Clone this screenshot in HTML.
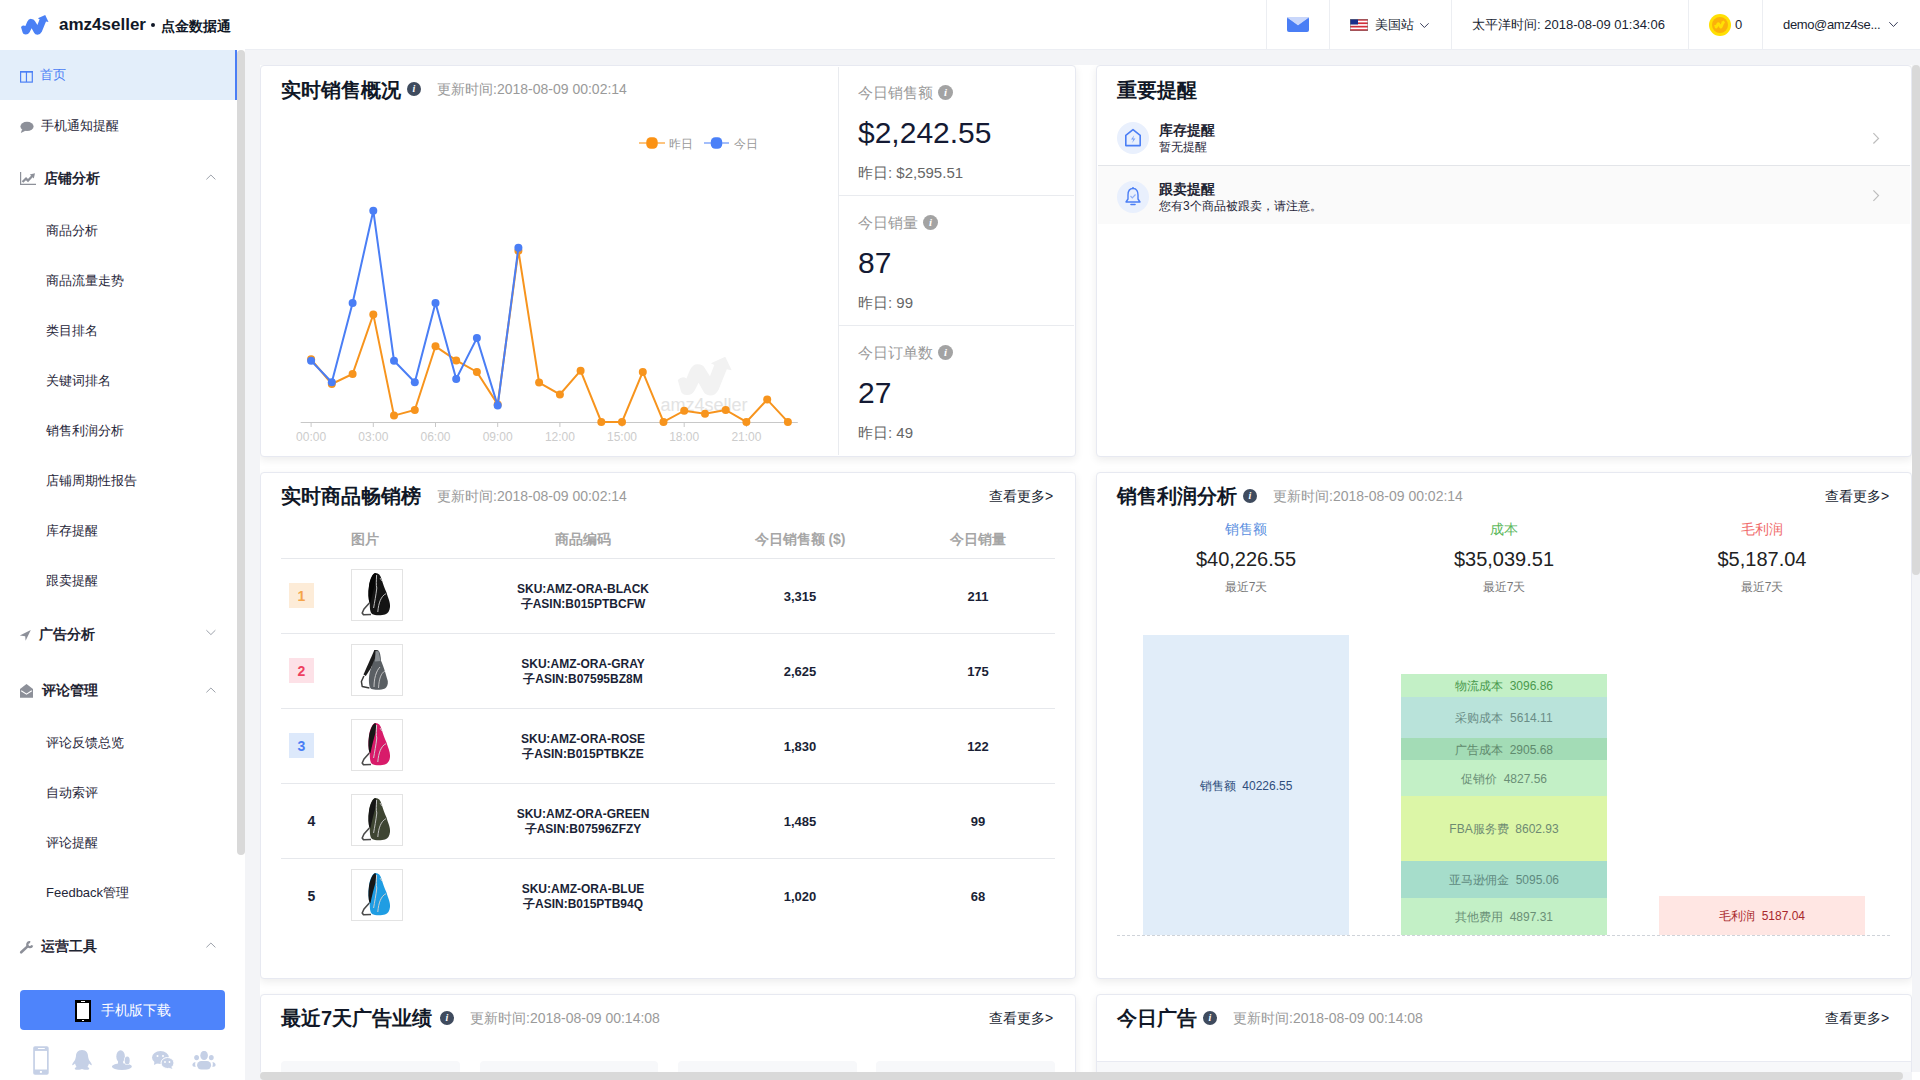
<!DOCTYPE html>
<html><head><meta charset="utf-8">
<style>
*{box-sizing:border-box;margin:0;padding:0}
html,body{width:1920px;height:1080px;overflow:hidden}
body{font-family:"Liberation Sans",sans-serif;background:#f3f4f7;position:relative;color:#333}
.abs{position:absolute}
.nw{white-space:nowrap}
#hdr{position:absolute;left:0;top:0;width:1920px;height:50px;background:#fff;border-bottom:1px solid #eceef3}
.vdiv{position:absolute;top:0;width:1px;height:49px;background:#eceef2}
#side{position:absolute;left:0;top:49px;width:245px;height:1031px;background:#fff}
.si{position:absolute;left:41px;font-size:13px;color:#1f2639;line-height:16px;white-space:nowrap}
.sg{position:absolute;font-size:14px;font-weight:bold;color:#1f2533;line-height:16px;white-space:nowrap}
.ss{position:absolute;left:46px;font-size:13px;color:#1f2639;line-height:16px;white-space:nowrap}
.chev{position:absolute;left:206px;width:8px;height:8px;border-left:1px solid #a8adb7;border-top:1px solid #a8adb7}
.card{position:absolute;background:#fff;border:1px solid #e7e9f1;border-radius:4px;box-shadow:0 3px 8px rgba(0,0,0,0.075)}
.ttl{position:absolute;font-size:20px;font-weight:bold;color:#111827;line-height:24px;white-space:nowrap}
.upd{position:absolute;font-size:14px;color:#9a9a9a;line-height:16px;white-space:nowrap}
.more{position:absolute;font-size:14px;color:#1a1f33;line-height:16px;white-space:nowrap}
.info{position:absolute;width:14px;height:14px;border-radius:50%;background:#3f4b5e;color:#fff;font:italic bold 10px/14px "Liberation Serif",serif;text-align:center}
.ginfo{position:absolute;width:15px;height:15px;border-radius:50%;background:#a3a3a3;color:#fff;font:italic bold 11px/15px "Liberation Serif",serif;text-align:center}
</style></head><body>

<!-- HEADER -->
<div id="hdr">
  <svg class="abs" style="left:16px;top:10px" width="40" height="30" viewBox="0 0 40 30"><path d="M5 16.9 Q7.2 14.6 9.4 16.1 L11.2 11.8 Q12.8 8.6 15.3 8.9 Q17.8 8.9 18.9 11 L21.4 15 L23.6 9.2 L21.9 8.3 L29.2 5 L32.5 11.9 L30 11.4 L25.8 21.8 Q24.2 24.9 21.4 24.8 Q19 24.7 18.1 22.8 L15.6 18.3 L13.6 22.2 Q12.2 24.6 9.7 24.5 Q7.1 24.4 6.6 22.6 Z" fill="#4a80f5"/></svg>
  <div class="abs nw" style="left:59px;top:15px;font-size:17px;font-weight:bold;color:#111827;line-height:20px">amz4seller</div>
  <div class="abs" style="left:151px;top:23px;width:4px;height:4px;border-radius:50%;background:#111827"></div>
  <div class="abs nw" style="left:161px;top:17px;font-size:14px;color:#111827;line-height:18px;font-weight:bold;-webkit-text-stroke:0">点金数据通</div>

  <div class="vdiv" style="left:1266px"></div>
  <div class="vdiv" style="left:1329px"></div>
  <div class="vdiv" style="left:1451px"></div>
  <div class="vdiv" style="left:1688px"></div>
  <div class="vdiv" style="left:1762px"></div>
  <svg class="abs" style="left:1287px;top:17px" width="22" height="15" viewBox="0 0 22 15"><rect x="0" y="0" width="22" height="15" rx="2" fill="#4a7ef5"/><path d="M0.5 1 L11 8.5 L21.5 1 V0.5 Q21.5 0 21 0 H1 Q0.5 0 0.5 0.5 Z" fill="#c9d7fb"/><path d="M0.3 1.2 L11 9 L21.7 1.2" fill="none" stroke="#4a7ef5" stroke-width="0.6"/></svg>
  <svg class="abs" style="left:1350px;top:19px" width="18" height="12" viewBox="0 0 18 12"><rect x="0" y="0" width="18" height="12" fill="#fff"/><rect x="0" y="0" width="18" height="1.7" fill="#d22f3a"/><rect x="0" y="3.4" width="18" height="1.7" fill="#d22f3a"/><rect x="0" y="6.8" width="18" height="1.7" fill="#d22f3a"/><rect x="0" y="10.2" width="18" height="1.8" fill="#d22f3a"/><rect x="0" y="0" width="8" height="5.5" fill="#1c2f8a"/><rect x="0.25" y="0.25" width="17.5" height="11.5" fill="none" stroke="#777" stroke-width="0.5"/></svg>
  <div class="abs nw" style="left:1375px;top:16px;font-size:13px;color:#1a1f33;line-height:17px">美国站</div>
  <svg class="abs" style="left:1416px;top:18px" width="16" height="14" viewBox="0 0 16 14"><polyline points="4.3,5.3 8.4,9.5 12.6,5.3" fill="none" stroke="#3a3f5c" stroke-width="1"/></svg>
  <div class="abs nw" style="left:1472px;top:16px;font-size:13px;color:#1a1f33;line-height:17px">太平洋时间: 2018-08-09 01:34:06</div>
  <svg class="abs" style="left:1709px;top:14px" width="22" height="22" viewBox="0 0 22 22"><circle cx="11" cy="11" r="11" fill="#ffe003"/><circle cx="11" cy="11" r="8" fill="#fbb10b"/><path transform="translate(3.2 4.6) scale(0.4)" d="M5 16.9 Q7.2 14.6 9.4 16.1 L11.2 11.8 Q12.8 8.6 15.3 8.9 Q17.8 8.9 18.9 11 L21.4 15 L23.6 9.2 L21.9 8.3 L29.2 5 L32.5 11.9 L30 11.4 L25.8 21.8 Q24.2 24.9 21.4 24.8 Q19 24.7 18.1 22.8 L15.6 18.3 L13.6 22.2 Q12.2 24.6 9.7 24.5 Q7.1 24.4 6.6 22.6 Z" fill="#ffe003"/></svg>
  <div class="abs nw" style="left:1735px;top:16px;font-size:13px;color:#1a1f33;line-height:17px">0</div>
  <div class="abs nw" style="left:1783px;top:16px;font-size:13px;color:#1a1f33;line-height:17px;letter-spacing:-0.35px">demo@amz4se...</div>
  <svg class="abs" style="left:1885px;top:17px" width="16" height="14" viewBox="0 0 16 14"><polyline points="4.3,5.2 8.5,9.5 12.6,5.2" fill="none" stroke="#3a3f5c" stroke-width="1"/></svg>
</div>

<!-- SIDEBAR -->
<div id="side">
  <div class="abs" style="left:0;top:1px;width:235px;height:50px;background:#e3eefa"></div>
  <div class="abs" style="left:235px;top:1px;width:2px;height:50px;background:#4a7ef5"></div>
  <div class="abs" style="left:237px;top:1px;width:8px;height:805px;background:#d9d9d9;border-radius:4px"></div>
</div>
<!-- sidebar items -->
<svg class="abs" style="left:20px;top:71px" width="13" height="12" viewBox="0 0 13 12"><rect x="0.6" y="0.6" width="11.7" height="10.5" fill="none" stroke="#4c80f5" stroke-width="1.2"/><rect x="0" y="0" width="12.9" height="1.6" fill="#4c80f5"/><line x1="6.45" y1="0.6" x2="6.45" y2="11" stroke="#4c80f5" stroke-width="1.2"/></svg>
<div class="si" style="left:40px;top:67px;color:#4c80f5">首页</div>
<svg class="abs" style="left:19px;top:121px" width="15" height="13" viewBox="0 0 15 13"><ellipse cx="8" cy="5.4" rx="6.6" ry="4.6" fill="#8d9099"/><path d="M3 8.5 L1.8 12 L7 9.6 Z" fill="#8d9099"/></svg>
<div class="si" style="top:118px">手机通知提醒</div>
<svg class="abs" style="left:20px;top:172px" width="16" height="13" viewBox="0 0 16 13"><path d="M0.6 0 V12.4 H16" fill="none" stroke="#8d9099" stroke-width="1.2"/><path d="M2.5 10 L6 6.6 L8 8.6 L12.3 4" fill="none" stroke="#8d9099" stroke-width="2.2"/><path d="M9.8 2.6 L15 1.2 L13.8 6.4 Z" fill="#8d9099"/></svg>
<div class="sg" style="left:44px;top:170px">店铺分析</div>
<svg class="abs" style="left:204px;top:172px" width="14" height="10" viewBox="0 0 14 10"><polyline points="2.4,7.4 6.9,3 11.4,7.4" fill="none" stroke="#9da2ab" stroke-width="1"/></svg>
<div class="ss" style="top:223px">商品分析</div>
<div class="ss" style="top:273px">商品流量走势</div>
<div class="ss" style="top:323px">类目排名</div>
<div class="ss" style="top:373px">关键词排名</div>
<div class="ss" style="top:423px">销售利润分析</div>
<div class="ss" style="top:473px">店铺周期性报告</div>
<div class="ss" style="top:523px">库存提醒</div>
<div class="ss" style="top:573px">跟卖提醒</div>
<svg class="abs" style="left:19px;top:629px" width="13" height="13" viewBox="0 0 13 13"><path d="M0.8 6.6 L11.8 1 L6.6 11.8 L6.2 7.2 Z" fill="#8d9099"/></svg>
<div class="sg" style="left:39px;top:626px">广告分析</div>
<svg class="abs" style="left:204px;top:627px" width="14" height="10" viewBox="0 0 14 10"><polyline points="2.4,3.2 6.9,7.6 11.4,3.2" fill="none" stroke="#9da2ab" stroke-width="1"/></svg>
<svg class="abs" style="left:19px;top:684px" width="16" height="15" viewBox="0 0 16 15"><path d="M1 5 L7.5 0 L14 5 V13.8 H1 Z" fill="#8d9099"/><path d="M2.2 6.8 L7.5 10.2 L12.8 6.8" fill="none" stroke="#fff" stroke-width="1.1"/></svg>
<div class="sg" style="left:42px;top:682px">评论管理</div>
<svg class="abs" style="left:204px;top:685px" width="14" height="10" viewBox="0 0 14 10"><polyline points="2.4,7.4 6.9,3 11.4,7.4" fill="none" stroke="#9da2ab" stroke-width="1"/></svg>
<div class="ss" style="top:735px">评论反馈总览</div>
<div class="ss" style="top:785px">自动索评</div>
<div class="ss" style="top:835px">评论提醒</div>
<div class="ss" style="top:885px">Feedback管理</div>
<svg class="abs" style="left:19px;top:939px" width="16" height="16" viewBox="0 0 16 16"><path d="M2.2 13.3 L8.3 7.6" stroke="#8d9099" stroke-width="2.6" stroke-linecap="round"/><path d="M11.2 3.1 A2.5 2.5 0 1 0 13.2 6.3" fill="none" stroke="#8d9099" stroke-width="2.3"/></svg>
<div class="sg" style="left:41px;top:938px">运营工具</div>
<svg class="abs" style="left:204px;top:940px" width="14" height="10" viewBox="0 0 14 10"><polyline points="2.4,7.4 6.9,3 11.4,7.4" fill="none" stroke="#9da2ab" stroke-width="1"/></svg>
<div class="abs" style="left:20px;top:990px;width:205px;height:40px;background:#4e84fb;border-radius:4px"></div>
<svg class="abs" style="left:75px;top:1000px" width="16" height="22" viewBox="0 0 16 22"><rect x="0" y="0" width="16" height="22" fill="#000"/><rect x="2" y="3" width="12" height="16" fill="#fff"/><rect x="6" y="1" width="4" height="1" fill="#fff"/><rect x="7" y="20" width="2" height="1" fill="#fff"/></svg>
<div class="abs nw" style="left:101px;top:1002px;font-size:14px;color:#fff;line-height:16px">手机版下载</div>
<svg class="abs" style="left:33px;top:1046px" width="16" height="29" viewBox="0 0 16 29"><rect x="0.2" y="0.2" width="15.5" height="28.5" rx="1.8" fill="#c5d0e6"/><rect x="1.9" y="4.9" width="12.1" height="18.6" fill="#fff"/><rect x="4.9" y="2" width="6.9" height="1" fill="#fff"/><rect x="6.9" y="25" width="2" height="1.9" fill="#fff"/></svg>
<svg class="abs" style="left:72px;top:1050px" width="20" height="20" viewBox="0 0 20 20"><path d="M10 0 C5.5 0 4 3.5 4 6 C3.8 7.5 3.5 8.5 3 10 C1.5 12 0.3 13.5 0.2 15 C0.5 15.5 1.5 15 3 13.5 C3.5 15 4 16 4.5 17 C3 17.6 2.4 18.5 3 19.3 C3.8 20 7 20 8.5 19.5 L10 19 L11.5 19.5 C13 20 16.2 20 17 19.3 C17.6 18.5 17 17.6 15.5 17 C16 16 16.5 15 17 13.5 C18.5 15 19.5 15.5 19.8 15 C19.7 13.5 18.5 12 17 10 C16.5 8.5 16.2 7.5 16 6 C16 3.5 14.5 0 10 0 Z" fill="#c5d0e6"/></svg>
<svg class="abs" style="left:112px;top:1050px" width="22" height="21" viewBox="0 0 22 21"><ellipse cx="9.9" cy="16.6" rx="10" ry="3.4" fill="#c5d0e6"/><ellipse cx="8.6" cy="6.4" rx="4.3" ry="6.2" fill="#c5d0e6"/><rect x="6" y="10" width="5.2" height="4.5" fill="#c5d0e6"/><ellipse cx="15.2" cy="10.6" rx="3.1" ry="4.5" fill="#fff"/><ellipse cx="15.2" cy="10.6" rx="2.5" ry="4" fill="#c5d0e6"/></svg>
<svg class="abs" style="left:152px;top:1051px" width="22" height="18" viewBox="0 0 22 18"><ellipse cx="8.5" cy="6.5" rx="8.5" ry="6.5" fill="#c5d0e6"/><path d="M2.5 10 L2 14 L6 12 Z" fill="#c5d0e6"/><circle cx="5.5" cy="5" r="1" fill="#fff"/><circle cx="11" cy="5" r="1" fill="#fff"/><ellipse cx="15.5" cy="12" rx="6.5" ry="5.5" fill="#c5d0e6" stroke="#fff" stroke-width="1"/><path d="M19 15.5 L20.5 18 L16.5 16.5 Z" fill="#c5d0e6"/><circle cx="13" cy="11" r="0.9" fill="#fff"/><circle cx="17.5" cy="11" r="0.9" fill="#fff"/></svg>
<svg class="abs" style="left:191px;top:1051px" width="26" height="20" viewBox="0 0 26 20"><ellipse cx="13.1" cy="4.4" rx="3.8" ry="4.6" fill="#c5d0e6"/><ellipse cx="5.6" cy="6.6" rx="2.4" ry="2.7" fill="#c5d0e6"/><ellipse cx="20.3" cy="6.6" rx="2.4" ry="2.7" fill="#c5d0e6"/><rect x="6.1" y="9.9" width="14" height="8.6" rx="4.2" fill="#c5d0e6"/><path d="M4.5 11 C2 11.5 1 13 1.5 14.5 C2 15.8 3.5 16 4.8 15.8 C4 14.3 4 12.5 4.5 11 Z" fill="#c5d0e6"/><path d="M21.5 11 C24 11.5 25 13 24.5 14.5 C24 15.8 22.5 16 21.2 15.8 C22 14.3 22 12.5 21.5 11 Z" fill="#c5d0e6"/></svg>


<!-- MAIN CARDS -->
<div class="abs" style="left:260px;top:65px;width:1652px;height:1015px;background:#fff"></div>
<div class="card" style="left:260px;top:65px;width:816px;height:392px"></div>
<div class="ttl" style="left:281px;top:78px">实时销售概况</div>
<div class="info" style="left:407px;top:82px">i</div>
<div class="upd" style="left:437px;top:81px">更新时间:2018-08-09 00:02:14</div>
<svg class="abs" style="left:0;top:0" width="1080" height="460" viewBox="0 0 1080 460">
  <path transform="translate(668 346.9) scale(1.96)" d="M5 16.9 Q7.2 14.6 9.4 16.1 L11.2 11.8 Q12.8 8.6 15.3 8.9 Q17.8 8.9 18.9 11 L21.4 15 L23.6 9.2 L21.9 8.3 L29.2 5 L32.5 11.9 L30 11.4 L25.8 21.8 Q24.2 24.9 21.4 24.8 Q19 24.7 18.1 22.8 L15.6 18.3 L13.6 22.2 Q12.2 24.6 9.7 24.5 Q7.1 24.4 6.6 22.6 Z" fill="#f2f2f2"/>
  <text x="704" y="411" text-anchor="middle" font-size="18" fill="#e3e3e3" font-family="Liberation Sans">amz4seller</text>
  <line x1="300.7" y1="422.5" x2="797.8" y2="422.5" stroke="#c8c8c8" stroke-width="1"/><line x1="311.1" y1="422.5" x2="311.1" y2="427" stroke="#c8c8c8" stroke-width="1"/><line x1="373.3" y1="422.5" x2="373.3" y2="427" stroke="#c8c8c8" stroke-width="1"/><line x1="435.5" y1="422.5" x2="435.5" y2="427" stroke="#c8c8c8" stroke-width="1"/><line x1="497.7" y1="422.5" x2="497.7" y2="427" stroke="#c8c8c8" stroke-width="1"/><line x1="559.9" y1="422.5" x2="559.9" y2="427" stroke="#c8c8c8" stroke-width="1"/><line x1="622.0" y1="422.5" x2="622.0" y2="427" stroke="#c8c8c8" stroke-width="1"/><line x1="684.2" y1="422.5" x2="684.2" y2="427" stroke="#c8c8c8" stroke-width="1"/><line x1="746.4" y1="422.5" x2="746.4" y2="427" stroke="#c8c8c8" stroke-width="1"/>
  <g font-size="12" fill="#cccccc" font-family="Liberation Sans"><text x="311.1" y="441" text-anchor="middle">00:00</text><text x="373.3" y="441" text-anchor="middle">03:00</text><text x="435.5" y="441" text-anchor="middle">06:00</text><text x="497.7" y="441" text-anchor="middle">09:00</text><text x="559.9" y="441" text-anchor="middle">12:00</text><text x="622.0" y="441" text-anchor="middle">15:00</text><text x="684.2" y="441" text-anchor="middle">18:00</text><text x="746.4" y="441" text-anchor="middle">21:00</text></g>
  <polyline points="311.1,359.3 331.8,384.0 352.6,374.0 373.3,314.4 394.0,415.6 414.8,410.0 435.5,346.3 456.2,360.4 476.9,371.9 497.7,404.4 518.4,250.7 539.1,382.6 559.9,394.4 580.6,370.7 601.3,421.9 622.0,421.9 642.8,371.9 663.5,421.9 684.2,410.7 705.0,413.7 725.7,410.0 746.4,421.9 767.2,399.6 787.9,421.9" fill="none" stroke="#f7941d" stroke-width="2"/>
  <circle cx="311.1" cy="359.3" r="4" fill="#f7941d"/><circle cx="331.8" cy="384.0" r="4" fill="#f7941d"/><circle cx="352.6" cy="374.0" r="4" fill="#f7941d"/><circle cx="373.3" cy="314.4" r="4" fill="#f7941d"/><circle cx="394.0" cy="415.6" r="4" fill="#f7941d"/><circle cx="414.8" cy="410.0" r="4" fill="#f7941d"/><circle cx="435.5" cy="346.3" r="4" fill="#f7941d"/><circle cx="456.2" cy="360.4" r="4" fill="#f7941d"/><circle cx="476.9" cy="371.9" r="4" fill="#f7941d"/><circle cx="497.7" cy="404.4" r="4" fill="#f7941d"/><circle cx="518.4" cy="250.7" r="4" fill="#f7941d"/><circle cx="539.1" cy="382.6" r="4" fill="#f7941d"/><circle cx="559.9" cy="394.4" r="4" fill="#f7941d"/><circle cx="580.6" cy="370.7" r="4" fill="#f7941d"/><circle cx="601.3" cy="421.9" r="4" fill="#f7941d"/><circle cx="622.0" cy="421.9" r="4" fill="#f7941d"/><circle cx="642.8" cy="371.9" r="4" fill="#f7941d"/><circle cx="663.5" cy="421.9" r="4" fill="#f7941d"/><circle cx="684.2" cy="410.7" r="4" fill="#f7941d"/><circle cx="705.0" cy="413.7" r="4" fill="#f7941d"/><circle cx="725.7" cy="410.0" r="4" fill="#f7941d"/><circle cx="746.4" cy="421.9" r="4" fill="#f7941d"/><circle cx="767.2" cy="399.6" r="4" fill="#f7941d"/><circle cx="787.9" cy="421.9" r="4" fill="#f7941d"/>
  <polyline points="311.1,360.7 331.8,382.2 352.6,303.0 373.3,210.7 394.0,360.7 414.8,382.2 435.5,303.0 456.2,378.9 476.9,338.1 497.7,405.6 518.4,247.8" fill="none" stroke="#4a7ef5" stroke-width="2"/>
  <circle cx="311.1" cy="360.7" r="4" fill="#4a7ef5"/><circle cx="331.8" cy="382.2" r="4" fill="#4a7ef5"/><circle cx="352.6" cy="303.0" r="4" fill="#4a7ef5"/><circle cx="373.3" cy="210.7" r="4" fill="#4a7ef5"/><circle cx="394.0" cy="360.7" r="4" fill="#4a7ef5"/><circle cx="414.8" cy="382.2" r="4" fill="#4a7ef5"/><circle cx="435.5" cy="303.0" r="4" fill="#4a7ef5"/><circle cx="456.2" cy="378.9" r="4" fill="#4a7ef5"/><circle cx="476.9" cy="338.1" r="4" fill="#4a7ef5"/><circle cx="497.7" cy="405.6" r="4" fill="#4a7ef5"/><circle cx="518.4" cy="247.8" r="4" fill="#4a7ef5"/>
  <line x1="639" y1="143" x2="665" y2="143" stroke="#fdc47e" stroke-width="2"/>
  <rect x="646.3" y="137.3" width="11.4" height="11.4" rx="4.5" fill="#fb9214"/>
  <line x1="704" y1="143" x2="729" y2="143" stroke="#a3befb" stroke-width="2"/>
  <rect x="710.8" y="137.3" width="11.4" height="11.4" rx="4.5" fill="#4a80f8"/>
  <text x="669" y="148" font-size="12" fill="#999" font-family="Liberation Sans">昨日</text>
  <text x="734" y="148" font-size="12" fill="#999" font-family="Liberation Sans">今日</text>
</svg>
<div class="abs" style="left:838px;top:67px;width:1px;height:388px;background:#e9ebef"></div>
<div class="abs" style="left:839px;top:195px;width:235px;height:1px;background:#e9ebef"></div>
<div class="abs" style="left:839px;top:325px;width:235px;height:1px;background:#e9ebef"></div>
<div class="abs nw" style="left:858px;top:84px;font-size:15px;color:#9a9a9a;line-height:17px">今日销售额</div>
<div class="ginfo" style="left:938px;top:85px">i</div>
<div class="abs nw" style="left:858px;top:116px;font-size:30px;color:#141a33;line-height:34px">$2,242.55</div>
<div class="abs nw" style="left:858px;top:164px;font-size:15px;color:#666;line-height:17px">昨日: $2,595.51</div>
<div class="abs nw" style="left:858px;top:214px;font-size:15px;color:#9a9a9a;line-height:17px">今日销量</div>
<div class="ginfo" style="left:923px;top:215px">i</div>
<div class="abs nw" style="left:858px;top:246px;font-size:30px;color:#141a33;line-height:34px">87</div>
<div class="abs nw" style="left:858px;top:294px;font-size:15px;color:#666;line-height:17px">昨日: 99</div>
<div class="abs nw" style="left:858px;top:344px;font-size:15px;color:#9a9a9a;line-height:17px">今日订单数</div>
<div class="ginfo" style="left:938px;top:345px">i</div>
<div class="abs nw" style="left:858px;top:376px;font-size:30px;color:#141a33;line-height:34px">27</div>
<div class="abs nw" style="left:858px;top:424px;font-size:15px;color:#666;line-height:17px">昨日: 49</div>

<div class="card" style="left:1096px;top:65px;width:816px;height:392px"></div>
<div class="ttl" style="left:1117px;top:78px">重要提醒</div>
<div class="abs" style="left:1098px;top:165px;width:812px;height:1px;background:#e3e5e9"></div>
<div class="abs" style="left:1098px;top:166px;width:812px;height:58px;background:#fafafa"></div>
<div class="abs" style="left:1117px;top:122px;width:32px;height:32px;border-radius:50%;background:#e9f0fd"></div>
<svg class="abs" style="left:1124px;top:128px" width="18" height="20" viewBox="0 0 18 20"><path d="M1.8 7.3 L9 1.6 L16.2 7.3 V17.6 H1.8 Z" fill="none" stroke="#4a7ef5" stroke-width="1.6" stroke-linejoin="round"/><path d="M10.2 7.2 L7 11.6 H9.3 L8.2 15 L11.4 10.4 H9.1 Z" fill="#7aa2f8"/></svg>
<div class="abs nw" style="left:1159px;top:122px;font-size:14px;font-weight:bold;color:#1f2533;line-height:16px">库存提醒</div>
<div class="abs nw" style="left:1159px;top:140px;font-size:12px;color:#1f2639;line-height:15px">暂无提醒</div>
<div class="abs" style="left:1117px;top:181px;width:32px;height:32px;border-radius:50%;background:#e9f0fd"></div>
<svg class="abs" style="left:1124px;top:186px" width="18" height="22" viewBox="0 0 18 22"><path d="M9 2.5 C5 2.5 4 6 4 9 V13 L2 16 H16 L14 13 V9 C14 6 13 2.5 9 2.5 Z" fill="none" stroke="#4a7ef5" stroke-width="1.4" stroke-linejoin="round"/><line x1="9" y1="1" x2="9" y2="2.5" stroke="#4a7ef5" stroke-width="1.4"/><path d="M7 18.5 H11" stroke="#4a7ef5" stroke-width="1.6" stroke-linecap="round"/><path d="M6.5 10 L8.3 11.8 L11.5 8.5" fill="none" stroke="#8fb0f7" stroke-width="1.2"/></svg>
<div class="abs nw" style="left:1159px;top:181px;font-size:14px;font-weight:bold;color:#1f2533;line-height:16px">跟卖提醒</div>
<div class="abs nw" style="left:1159px;top:199px;font-size:12px;color:#1f2639;line-height:15px">您有3个商品被跟卖，请注意。</div>
<svg class="abs" style="left:1868px;top:128px" width="16" height="20" viewBox="0 0 16 20"><polyline points="5.4,5.2 10.5,10.4 5.4,15.5" fill="none" stroke="#bdbdbd" stroke-width="1.2"/></svg>
<svg class="abs" style="left:1868px;top:185px" width="16" height="20" viewBox="0 0 16 20"><polyline points="5.4,5.3 10.5,10.6 5.4,15.8" fill="none" stroke="#bdbdbd" stroke-width="1.2"/></svg>

<div class="card" style="left:260px;top:472px;width:816px;height:507px"></div>
<div class="ttl" style="left:281px;top:484px">实时商品畅销榜</div>
<div class="upd" style="left:437px;top:488px">更新时间:2018-08-09 00:02:14</div>
<div class="more" style="left:989px;top:488px">查看更多&gt;</div>
<div class="abs nw" style="left:325px;top:531px;width:80px;text-align:center;font-size:14px;font-weight:bold;color:#a6a6a6;line-height:16px">图片</div>
<div class="abs nw" style="left:483px;top:531px;width:200px;text-align:center;font-size:14px;font-weight:bold;color:#a6a6a6;line-height:16px">商品编码</div>
<div class="abs nw" style="left:700px;top:531px;width:200px;text-align:center;font-size:14px;font-weight:bold;color:#a6a6a6;line-height:16px">今日销售额 ($)</div>
<div class="abs nw" style="left:878px;top:531px;width:200px;text-align:center;font-size:14px;font-weight:bold;color:#a6a6a6;line-height:16px">今日销量</div>
<div class="abs" style="left:281px;top:558px;width:774px;height:1px;background:#e6e8ec"></div>
<div class="abs" style="left:289px;top:583px;width:25px;height:25px;background:#fdecd8;color:#f5a44a;font-size:14px;font-weight:bold;text-align:center;line-height:27px">1</div>
<div class="abs" style="left:351px;top:569px;width:52px;height:52px;border:1px solid #e3e3e3;background:#fff"></div>
<svg class="abs" style="left:351px;top:569px" width="52" height="52" viewBox="0 0 52 52"><path d="M18.4 34 L13 40 L11.2 44 L12.5 45.8 L20 45.5" fill="none" stroke="#4a4a4a" stroke-width="1.6" stroke-linejoin="round"/><path d="M24.6 4 C27.5 4 29.5 6 30.5 10 C32 15 33.5 19 35.5 23.5 C37 29 39.5 33 39 38 C38.5 42 37 44.5 34 45.5 C31 46.5 24 46.8 21 45 C19 43 18.7 39 18.8 34.5 C17.5 30 17 24 18 17 C19 10 21.5 4 24.6 4 Z" fill="#141414"/><path d="M24.5 4 C21.5 4.5 19 11 18 17 C17 24 17.3 30 18.4 33.8 L19.5 34 C21 27 22.5 20 24.5 14 C25 10 25.4 6 24.5 4 Z" fill="#050505"/><path d="M25.6 6 C25.3 12 25 16 25.8 19 C25 26 23.6 33 22.6 39" fill="none" stroke="#bdbdbd" stroke-width="1"/><path d="M35 24.7 C30 27 27.5 34 26.8 43" fill="none" stroke="#bdbdbd" stroke-width="1"/><path d="M29 9 L31 12" stroke="#bdbdbd" stroke-width="0.9"/></svg>
<div class="abs nw" style="left:483px;top:582px;width:200px;text-align:center;font-size:12px;font-weight:bold;color:#1a1f36;line-height:15px">SKU:AMZ-ORA-BLACK<br>子ASIN:B015PTBCFW</div>
<div class="abs nw" style="left:700px;top:589px;width:200px;text-align:center;font-size:13px;font-weight:bold;color:#1a1f36;line-height:16px">3,315</div>
<div class="abs nw" style="left:878px;top:589px;width:200px;text-align:center;font-size:13px;font-weight:bold;color:#1a1f36;line-height:16px">211</div>
<div class="abs" style="left:281px;top:633px;width:774px;height:1px;background:#e6e8ec"></div>
<div class="abs" style="left:289px;top:658px;width:25px;height:25px;background:#fde1e7;color:#ee3f5f;font-size:14px;font-weight:bold;text-align:center;line-height:27px">2</div>
<div class="abs" style="left:351px;top:644px;width:52px;height:52px;border:1px solid #e3e3e3;background:#fff"></div>
<svg class="abs" style="left:351px;top:644px" width="52" height="52" viewBox="0 0 52 52"><path d="M12.9 32 L10.4 37.5 L11.2 42.5 L18.4 44" fill="none" stroke="#3a3a3a" stroke-width="1.5" stroke-linejoin="round"/><path d="M23.4 6 L27.5 6.5 C29 8 29.8 12 30.1 17 C32 21 34 27 36.8 37 C37.2 40.5 36 43 34 44.5 C31 46 24 46.3 20.5 45 C18.5 43.8 17.8 40 17.9 35 C18.2 30 19 26 20.7 22.7 Z" fill="#5a5f63"/><path d="M23.4 6 L27 6.5 L20 24 L14.8 32 L12.5 30.5 Z" fill="#1c1c1c"/><path d="M24.5 7 L27.5 7.2 L29.5 17 L24 17.5 Z" fill="#8d9296"/><path d="M29 23 C25 27 23 35 23 43" fill="none" stroke="#c8c8c8" stroke-width="1"/><path d="M34 27 C30 29 28 35 27.5 44" fill="none" stroke="#c8c8c8" stroke-width="0.9"/></svg>
<div class="abs nw" style="left:483px;top:657px;width:200px;text-align:center;font-size:12px;font-weight:bold;color:#1a1f36;line-height:15px">SKU:AMZ-ORA-GRAY<br>子ASIN:B07595BZ8M</div>
<div class="abs nw" style="left:700px;top:664px;width:200px;text-align:center;font-size:13px;font-weight:bold;color:#1a1f36;line-height:16px">2,625</div>
<div class="abs nw" style="left:878px;top:664px;width:200px;text-align:center;font-size:13px;font-weight:bold;color:#1a1f36;line-height:16px">175</div>
<div class="abs" style="left:281px;top:708px;width:774px;height:1px;background:#e6e8ec"></div>
<div class="abs" style="left:289px;top:733px;width:25px;height:25px;background:#dde9fb;color:#4a7ef5;font-size:14px;font-weight:bold;text-align:center;line-height:27px">3</div>
<div class="abs" style="left:351px;top:719px;width:52px;height:52px;border:1px solid #e3e3e3;background:#fff"></div>
<svg class="abs" style="left:351px;top:719px" width="52" height="52" viewBox="0 0 52 52"><path d="M18.4 34 L13 40 L11.2 44 L12.5 45.8 L20 45.5" fill="none" stroke="#4a4a4a" stroke-width="1.6" stroke-linejoin="round"/><path d="M24.6 4 C27.5 4 29.5 6 30.5 10 C32 15 33.5 19 35.5 23.5 C37 29 39.5 33 39 38 C38.5 42 37 44.5 34 45.5 C31 46.5 24 46.8 21 45 C19 43 18.7 39 18.8 34.5 C17.5 30 17 24 18 17 C19 10 21.5 4 24.6 4 Z" fill="#d81b6a"/><path d="M24.5 4 C21.5 4.5 19 11 18 17 C17 24 17.3 30 18.4 33.8 L19.5 34 C21 27 22.5 20 24.5 14 C25 10 25.4 6 24.5 4 Z" fill="#161616"/><path d="M25.6 6 C25.3 12 25 16 25.8 19 C25 26 23.6 33 22.6 39" fill="none" stroke="#d0d0d0" stroke-width="1"/><path d="M35 24.7 C30 27 27.5 34 26.8 43" fill="none" stroke="#d0d0d0" stroke-width="1"/><path d="M29 9 L31 12" stroke="#d0d0d0" stroke-width="0.9"/></svg>
<div class="abs nw" style="left:483px;top:732px;width:200px;text-align:center;font-size:12px;font-weight:bold;color:#1a1f36;line-height:15px">SKU:AMZ-ORA-ROSE<br>子ASIN:B015PTBKZE</div>
<div class="abs nw" style="left:700px;top:739px;width:200px;text-align:center;font-size:13px;font-weight:bold;color:#1a1f36;line-height:16px">1,830</div>
<div class="abs nw" style="left:878px;top:739px;width:200px;text-align:center;font-size:13px;font-weight:bold;color:#1a1f36;line-height:16px">122</div>
<div class="abs" style="left:281px;top:783px;width:774px;height:1px;background:#e6e8ec"></div>
<div class="abs" style="left:289px;top:808px;width:45px;height:25px;color:#1a1f36;font-size:14px;font-weight:bold;text-align:center;line-height:27px">4</div>
<div class="abs" style="left:351px;top:794px;width:52px;height:52px;border:1px solid #e3e3e3;background:#fff"></div>
<svg class="abs" style="left:351px;top:794px" width="52" height="52" viewBox="0 0 52 52"><path d="M18.4 34 L13 40 L11.2 44 L12.5 45.8 L20 45.5" fill="none" stroke="#4a4a4a" stroke-width="1.6" stroke-linejoin="round"/><path d="M24.6 4 C27.5 4 29.5 6 30.5 10 C32 15 33.5 19 35.5 23.5 C37 29 39.5 33 39 38 C38.5 42 37 44.5 34 45.5 C31 46.5 24 46.8 21 45 C19 43 18.7 39 18.8 34.5 C17.5 30 17 24 18 17 C19 10 21.5 4 24.6 4 Z" fill="#3e4532"/><path d="M24.5 4 C21.5 4.5 19 11 18 17 C17 24 17.3 30 18.4 33.8 L19.5 34 C21 27 22.5 20 24.5 14 C25 10 25.4 6 24.5 4 Z" fill="#151515"/><path d="M25.6 6 C25.3 12 25 16 25.8 19 C25 26 23.6 33 22.6 39" fill="none" stroke="#c0c0c0" stroke-width="1"/><path d="M35 24.7 C30 27 27.5 34 26.8 43" fill="none" stroke="#c0c0c0" stroke-width="1"/><path d="M29 9 L31 12" stroke="#c0c0c0" stroke-width="0.9"/></svg>
<div class="abs nw" style="left:483px;top:807px;width:200px;text-align:center;font-size:12px;font-weight:bold;color:#1a1f36;line-height:15px">SKU:AMZ-ORA-GREEN<br>子ASIN:B07596ZFZY</div>
<div class="abs nw" style="left:700px;top:814px;width:200px;text-align:center;font-size:13px;font-weight:bold;color:#1a1f36;line-height:16px">1,485</div>
<div class="abs nw" style="left:878px;top:814px;width:200px;text-align:center;font-size:13px;font-weight:bold;color:#1a1f36;line-height:16px">99</div>
<div class="abs" style="left:281px;top:858px;width:774px;height:1px;background:#e6e8ec"></div>
<div class="abs" style="left:289px;top:883px;width:45px;height:25px;color:#1a1f36;font-size:14px;font-weight:bold;text-align:center;line-height:27px">5</div>
<div class="abs" style="left:351px;top:869px;width:52px;height:52px;border:1px solid #e3e3e3;background:#fff"></div>
<svg class="abs" style="left:351px;top:869px" width="52" height="52" viewBox="0 0 52 52"><path d="M18.4 34 L13 40 L11.2 44 L12.5 45.8 L20 45.5" fill="none" stroke="#4a4a4a" stroke-width="1.6" stroke-linejoin="round"/><path d="M24.6 4 C27.5 4 29.5 6 30.5 10 C32 15 33.5 19 35.5 23.5 C37 29 39.5 33 39 38 C38.5 42 37 44.5 34 45.5 C31 46.5 24 46.8 21 45 C19 43 18.7 39 18.8 34.5 C17.5 30 17 24 18 17 C19 10 21.5 4 24.6 4 Z" fill="#1f9de3"/><path d="M24.5 4 C21.5 4.5 19 11 18 17 C17 24 17.3 30 18.4 33.8 L19.5 34 C21 27 22.5 20 24.5 14 C25 10 25.4 6 24.5 4 Z" fill="#161616"/><path d="M25.6 6 C25.3 12 25 16 25.8 19 C25 26 23.6 33 22.6 39" fill="none" stroke="#d0d0d0" stroke-width="1"/><path d="M35 24.7 C30 27 27.5 34 26.8 43" fill="none" stroke="#d0d0d0" stroke-width="1"/><path d="M29 9 L31 12" stroke="#d0d0d0" stroke-width="0.9"/></svg>
<div class="abs nw" style="left:483px;top:882px;width:200px;text-align:center;font-size:12px;font-weight:bold;color:#1a1f36;line-height:15px">SKU:AMZ-ORA-BLUE<br>子ASIN:B015PTB94Q</div>
<div class="abs nw" style="left:700px;top:889px;width:200px;text-align:center;font-size:13px;font-weight:bold;color:#1a1f36;line-height:16px">1,020</div>
<div class="abs nw" style="left:878px;top:889px;width:200px;text-align:center;font-size:13px;font-weight:bold;color:#1a1f36;line-height:16px">68</div>

<div class="card" style="left:1096px;top:472px;width:816px;height:507px"></div>
<div class="ttl" style="left:1117px;top:484px">销售利润分析</div>
<div class="info" style="left:1243px;top:489px">i</div>
<div class="upd" style="left:1273px;top:488px">更新时间:2018-08-09 00:02:14</div>
<div class="more" style="left:1825px;top:488px">查看更多&gt;</div>
<div class="abs nw" style="left:1146px;top:521px;width:200px;text-align:center;font-size:14px;color:#5b8fe0;line-height:16px">销售额</div>
<div class="abs nw" style="left:1146px;top:547px;width:200px;text-align:center;font-size:20px;color:#222;line-height:24px">$40,226.55</div>
<div class="abs nw" style="left:1146px;top:580px;width:200px;text-align:center;font-size:12px;color:#777;line-height:15px">最近7天</div>
<div class="abs nw" style="left:1404px;top:521px;width:200px;text-align:center;font-size:14px;color:#5cb85c;line-height:16px">成本</div>
<div class="abs nw" style="left:1404px;top:547px;width:200px;text-align:center;font-size:20px;color:#222;line-height:24px">$35,039.51</div>
<div class="abs nw" style="left:1404px;top:580px;width:200px;text-align:center;font-size:12px;color:#777;line-height:15px">最近7天</div>
<div class="abs nw" style="left:1662px;top:521px;width:200px;text-align:center;font-size:14px;color:#f06b6b;line-height:16px">毛利润</div>
<div class="abs nw" style="left:1662px;top:547px;width:200px;text-align:center;font-size:20px;color:#222;line-height:24px">$5,187.04</div>
<div class="abs nw" style="left:1662px;top:580px;width:200px;text-align:center;font-size:12px;color:#777;line-height:15px">最近7天</div>
<div class="abs" style="left:1143px;top:635px;width:206px;height:300px;background:#e1edf9"></div>
<div class="abs nw" style="left:1143px;top:778px;width:206px;text-align:center;font-size:12px;color:#2f4d7c;line-height:16px">销售额&nbsp;&nbsp;40226.55</div>
<div class="abs nw" style="left:1401px;top:674px;width:206px;height:23px;background:#c3f0c6;color:#4a9a4e;font-size:12px;text-align:center;line-height:25px">物流成本&nbsp;&nbsp;3096.86</div>
<div class="abs nw" style="left:1401px;top:697px;width:206px;height:41px;background:#b9e3da;color:#6a8d86;font-size:12px;text-align:center;line-height:43px">采购成本&nbsp;&nbsp;5614.11</div>
<div class="abs nw" style="left:1401px;top:738px;width:206px;height:22px;background:#a3dcb6;color:#5f8a6d;font-size:12px;text-align:center;line-height:24px">广告成本&nbsp;&nbsp;2905.68</div>
<div class="abs nw" style="left:1401px;top:760px;width:206px;height:36px;background:#c3f0c6;color:#6a8f76;font-size:12px;text-align:center;line-height:38px">促销价&nbsp;&nbsp;4827.56</div>
<div class="abs nw" style="left:1401px;top:796px;width:206px;height:65px;background:#dcf6a7;color:#6d8a72;font-size:12px;text-align:center;line-height:67px">FBA服务费&nbsp;&nbsp;8602.93</div>
<div class="abs nw" style="left:1401px;top:861px;width:206px;height:37px;background:#a6ddcb;color:#5f8a80;font-size:12px;text-align:center;line-height:39px">亚马逊佣金&nbsp;&nbsp;5095.06</div>
<div class="abs nw" style="left:1401px;top:898px;width:206px;height:37px;background:#c3f0c6;color:#6a8f76;font-size:12px;text-align:center;line-height:39px">其他费用&nbsp;&nbsp;4897.31</div>
<div class="abs nw" style="left:1659px;top:896px;width:206px;height:39px;background:#ffe6e3;color:#a8282c;font-size:12px;text-align:center;line-height:41px">毛利润&nbsp;&nbsp;5187.04</div>
<div class="abs" style="left:1117px;top:935px;width:773px;height:0;border-top:1px dashed #cfd3d9"></div>

<div class="card" style="left:260px;top:994px;width:816px;height:120px"></div>
<div class="ttl" style="left:281px;top:1006px">最近7天广告业绩</div>
<div class="info" style="left:440px;top:1011px">i</div>
<div class="upd" style="left:470px;top:1010px">更新时间:2018-08-09 00:14:08</div>
<div class="more" style="left:989px;top:1010px">查看更多&gt;</div>
<div class="abs" style="left:281px;top:1061px;width:179px;height:30px;background:#f7f8fa;border-radius:4px"></div>
<div class="abs" style="left:480px;top:1061px;width:178px;height:30px;background:#f7f8fa;border-radius:4px"></div>
<div class="abs" style="left:678px;top:1061px;width:179px;height:30px;background:#f7f8fa;border-radius:4px"></div>
<div class="abs" style="left:876px;top:1061px;width:179px;height:30px;background:#f7f8fa;border-radius:4px"></div>

<div class="card" style="left:1096px;top:994px;width:816px;height:120px"></div>
<div class="ttl" style="left:1117px;top:1006px">今日广告</div>
<div class="info" style="left:1203px;top:1011px">i</div>
<div class="upd" style="left:1233px;top:1010px">更新时间:2018-08-09 00:14:08</div>
<div class="more" style="left:1825px;top:1010px">查看更多&gt;</div>
<div class="abs" style="left:1097px;top:1061px;width:814px;height:30px;background:#f7f8fa;border-top:1px solid #e8eaf2"></div>
<div class="abs" style="left:245px;top:50px;width:15px;height:1030px;background:#f3f4f7"></div>
<div class="abs" style="left:245px;top:50px;width:1675px;height:15px;background:#f3f4f7"></div>
<div class="abs" style="left:1912px;top:50px;width:8px;height:1030px;background:#f3f4f7"></div>
<div class="abs" style="left:1912px;top:65px;width:8px;height:510px;background:#d9d9d9;border-radius:4px"></div>
<div class="abs" style="left:245px;top:1072px;width:1667px;height:8px;background:#f3f4f7"></div>
<div class="abs" style="left:260px;top:1072px;width:1643px;height:8px;background:#d9d9d9;border-radius:4px"></div>
<div class="abs" style="left:1912px;top:1072px;width:8px;height:8px;background:#fff"></div>


</body></html>
